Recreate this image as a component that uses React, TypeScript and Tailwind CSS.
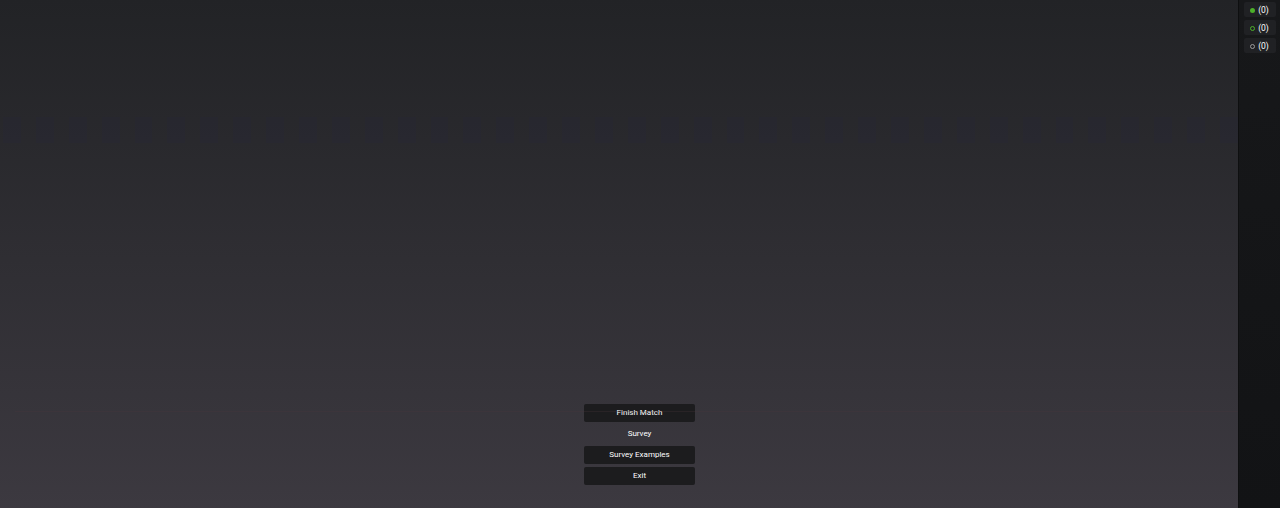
import React from "react";

export default function App() {
  const blocks = Array.from({ length: 38 });
  return (
    <div
      className="flex h-[508px] w-[1280px] overflow-hidden"
      style={{ fontFamily: "Roboto, 'Liberation Sans', sans-serif" }}
    >
      <div className="relative flex flex-1 flex-col bg-gradient-to-b from-[#222326] to-[#3c3940]">
        <div className="absolute left-0 right-0 top-[117px] flex gap-[15px] pl-[3px]">
          {blocks.map((_, i) => (
            <div key={i} className="h-[26px] w-[18px] bg-[#2a2a50]/10" />
          ))}
        </div>
        <div className="absolute left-[15px] right-0 top-[411px] h-px bg-[#4a343a]/30" />
        <div className="mt-auto mb-[23px] flex flex-col items-center gap-[3px] pl-[41px] text-[8px] font-normal leading-none text-white">
          <button className="flex h-[18px] w-[111px] items-center justify-center rounded-[2px] bg-[#1c1c1e]">
            Finish Match
          </button>
          <button className="flex h-[18px] w-[111px] items-center justify-center">
            Survey
          </button>
          <button className="flex h-[18px] w-[111px] items-center justify-center rounded-[2px] bg-[#1c1c1e]">
            Survey Examples
          </button>
          <button className="flex h-[18px] w-[111px] items-center justify-center rounded-[2px] bg-[#1c1c1e]">
            Exit
          </button>
        </div>
      </div>
      <div className="flex w-[42px] flex-col items-center gap-[3px] border-l border-[#0e0f10] bg-gradient-to-b from-[#17181a] to-[#121315] pt-[2px] text-[8.5px] leading-none text-white">
        <div className="flex h-[15px] w-[32px] items-center justify-center gap-[3px] rounded-[2px] bg-[#202124] pt-[1px]">
          <span className="h-[5px] w-[5px] rounded-full bg-[#4caf2a]" />
          <span>(0)</span>
        </div>
        <div className="flex h-[15px] w-[32px] items-center justify-center gap-[3px] rounded-[2px] bg-[#202124] pt-[1px]">
          <span className="h-[5px] w-[5px] rounded-full border border-[#4caf2a]" />
          <span>(0)</span>
        </div>
        <div className="flex h-[15px] w-[32px] items-center justify-center gap-[3px] rounded-[2px] bg-[#202124] pt-[1px]">
          <span className="h-[5px] w-[5px] rounded-full border border-[#9a9a9a]" />
          <span>(0)</span>
        </div>
      </div>
    </div>
  );
}
